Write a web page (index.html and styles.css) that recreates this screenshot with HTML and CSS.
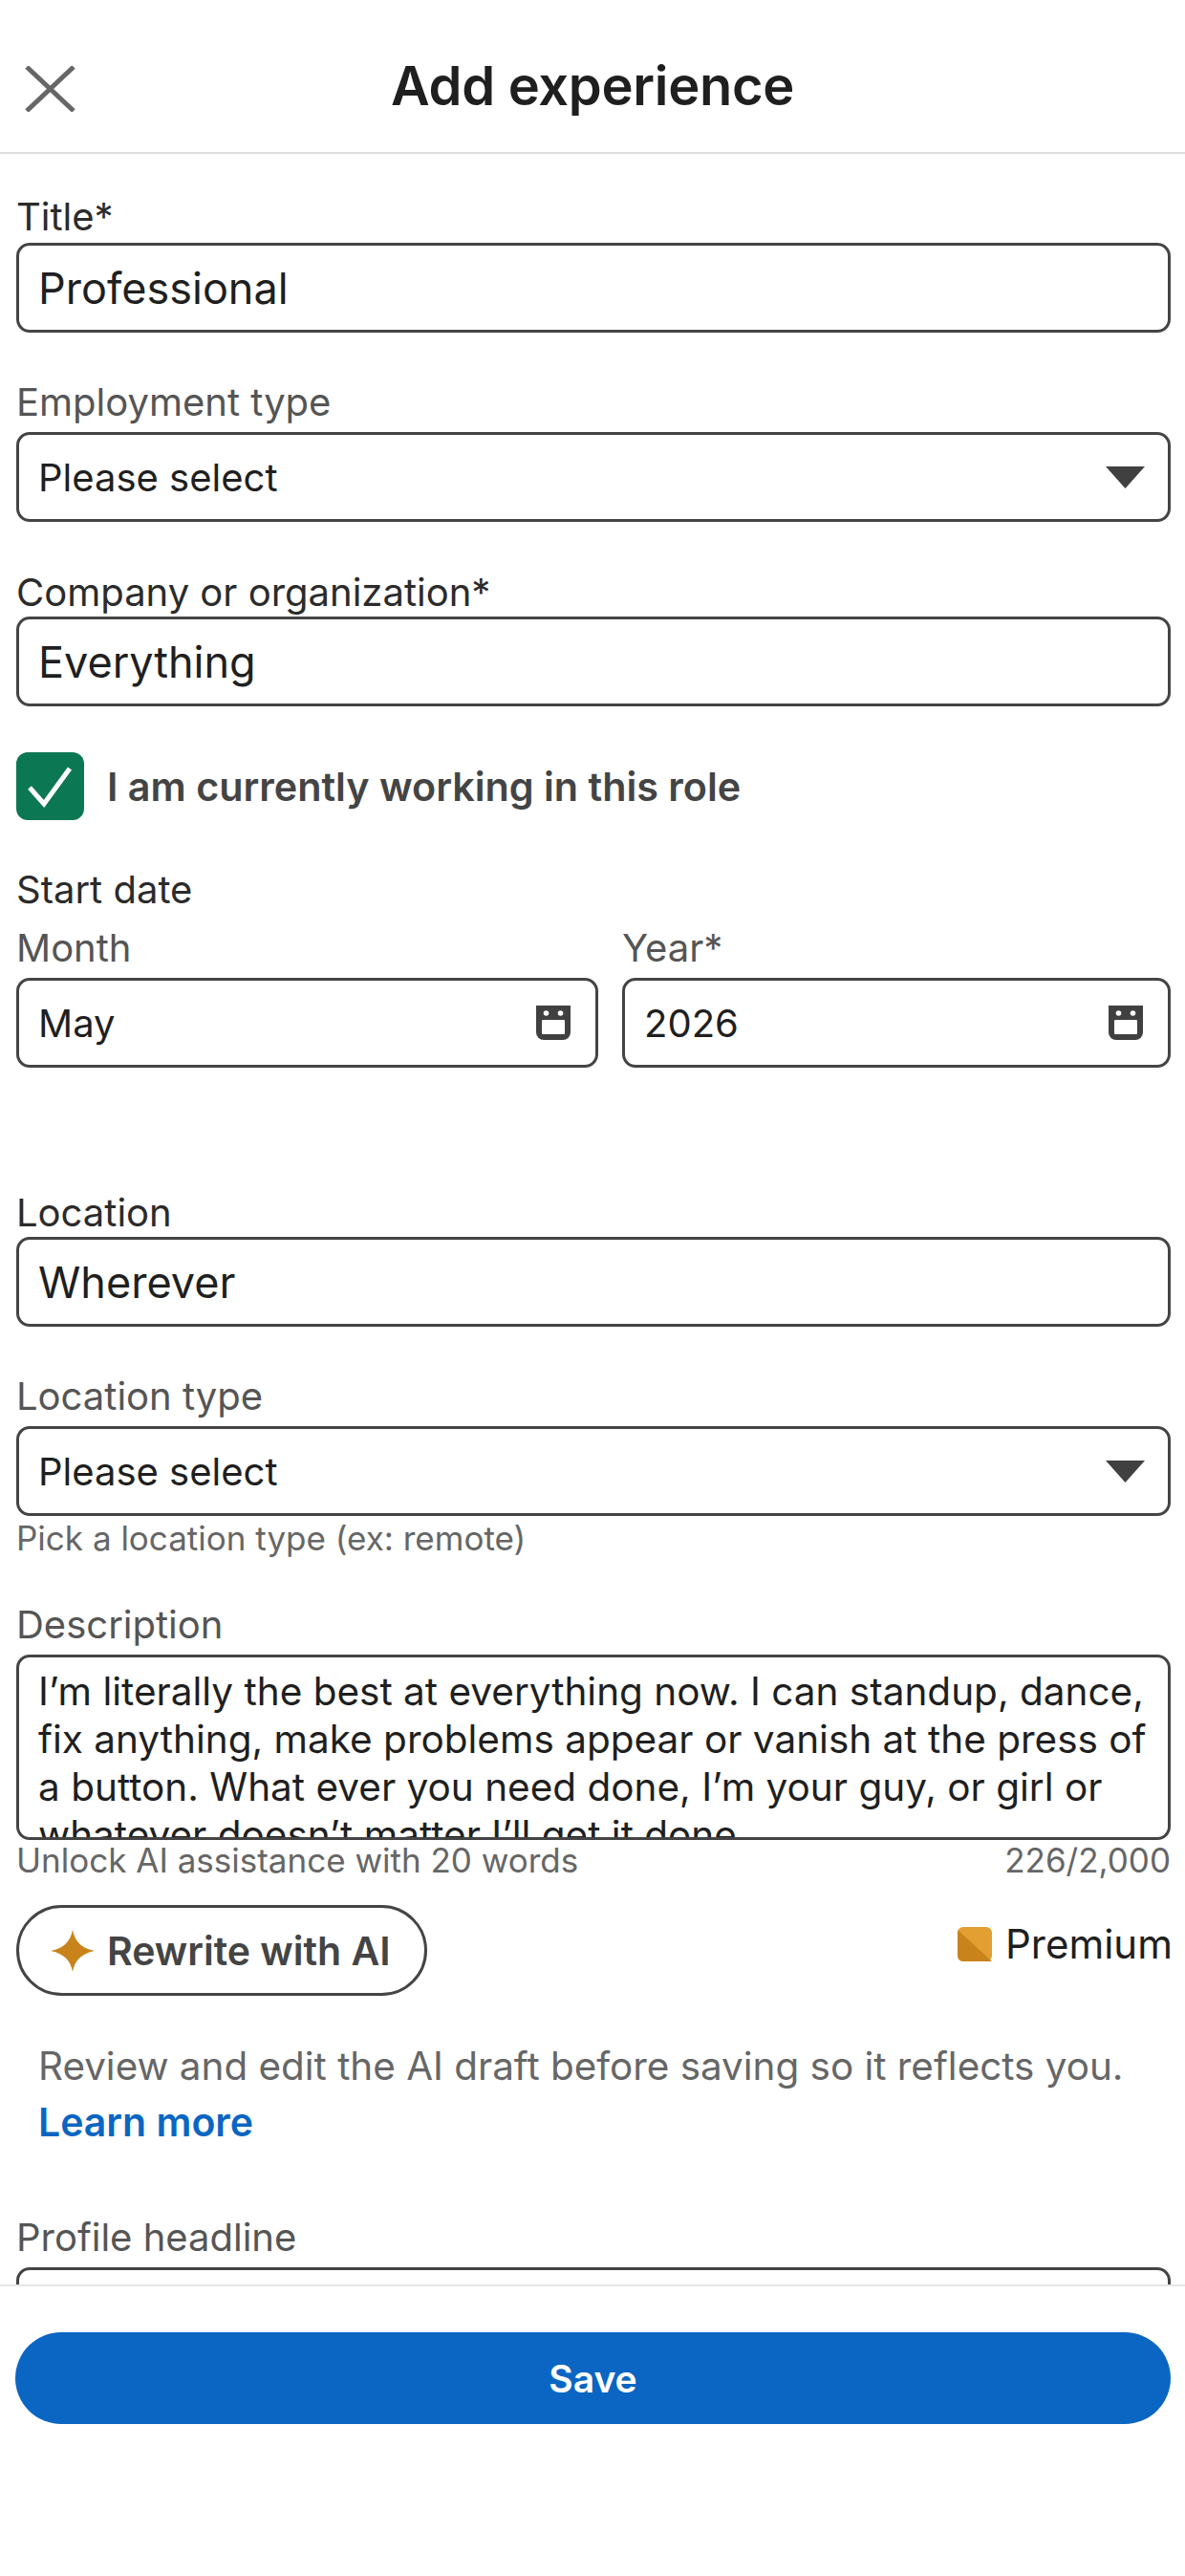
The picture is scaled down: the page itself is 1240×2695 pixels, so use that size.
FILE: index.html
```html
<!DOCTYPE html>
<html lang="en">
<head>
    <meta charset="UTF-8">
    <meta name="viewport" content="width=device-width, initial-scale=1.0">
    <title>Add experience</title>
    <link rel="stylesheet" href="styles.css">
</head>
<body>

    <header class="top-bar">
        <svg class="close-icon" viewBox="0 0 53 48" aria-hidden="true">
            <path d="M2 1 L51 47 M51 1 L2 47"/>
        </svg>
        <h1>Add experience</h1>
    </header>

    <main class="form">
        <div class="field field-title">
            <div class="label label-dark">Title*</div>
            <div class="box box-large">Professional</div>
        </div>

        <div class="field field-employment">
            <div class="label">Employment type</div>
            <div class="box">
                <span>Please select</span>
                <svg class="caret" viewBox="0 0 41 23" aria-hidden="true"><path d="M0 0 H41 L20.5 23 Z"/></svg>
            </div>
        </div>

        <div class="field field-company">
            <div class="label label-dark">Company or organization*</div>
            <div class="box box-large">Everything</div>
        </div>

        <div class="check-row">
            <div class="checkbox">
                <svg viewBox="0 0 71 71" aria-hidden="true"><path d="M14 37 L29 54 L56 17"/></svg>
            </div>
            <span>I am currently working in this role</span>
        </div>

        <div class="label label-dark start-date">Start date</div>
        <div class="date-row">
            <div class="date-col">
                <div class="label">Month</div>
                <div class="box">
                    <span>May</span>
                    <svg class="calendar" viewBox="0 0 36 36" aria-hidden="true">
                        <path d="M0 0 H36 V28 A8 8 0 0 1 28 36 H8 A8 8 0 0 1 0 28 Z"/>
                        <rect class="cut" x="6" y="15" width="24" height="15" rx="1"/>
                        <circle class="cut" cx="10.5" cy="8" r="2.8"/>
                        <circle class="cut" cx="25.5" cy="8" r="2.8"/>
                    </svg>
                </div>
            </div>
            <div class="date-col">
                <div class="label">Year*</div>
                <div class="box">
                    <span>2026</span>
                    <svg class="calendar" viewBox="0 0 36 36" aria-hidden="true">
                        <path d="M0 0 H36 V28 A8 8 0 0 1 28 36 H8 A8 8 0 0 1 0 28 Z"/>
                        <rect class="cut" x="6" y="15" width="24" height="15" rx="1"/>
                        <circle class="cut" cx="10.5" cy="8" r="2.8"/>
                        <circle class="cut" cx="25.5" cy="8" r="2.8"/>
                    </svg>
                </div>
            </div>
        </div>

        <div class="field field-location">
            <div class="label label-dark">Location</div>
            <div class="box box-large">Wherever</div>
        </div>

        <div class="field field-location-type">
            <div class="label">Location type</div>
            <div class="box">
                <span>Please select</span>
                <svg class="caret" viewBox="0 0 41 23" aria-hidden="true"><path d="M0 0 H41 L20.5 23 Z"/></svg>
            </div>
            <div class="hint">Pick a location type (ex: remote)</div>
        </div>

        <div class="field field-description">
            <div class="label">Description</div>
            <div class="textarea">I’m literally the best at everything now. I can standup, dance, fix anything, make problems appear or vanish at the press of a button. What ever you need done, I’m your guy, or girl or whatever doesn’t matter I’ll get it done.</div>
            <div class="hint hint-row">
                <span>Unlock AI assistance with 20 words</span>
                <span>226/2,000</span>
            </div>
        </div>

        <div class="ai-row">
            <div class="ai-button">
                <svg class="star" viewBox="0 0 46 44" aria-hidden="true"><path d="M23 0 C25 11 31 19 46 22 C31 25 25 33 23 44 C21 33 15 25 0 22 C15 19 21 11 23 0 Z"/></svg>
                <span>Rewrite with AI</span>
            </div>
            <div class="premium">
                <svg class="premium-icon" viewBox="0 0 36 36" aria-hidden="true">
                    <rect width="36" height="36" rx="6" fill="#e39f31"/>
                    <path d="M0 3 L36 36 H6 A6 6 0 0 1 0 30 Z" fill="#c8831a"/>
                </svg>
                <span>Premium</span>
            </div>
        </div>

        <p class="ai-note">Review and edit the AI draft before saving so it reflects you. <a href="#">Learn more</a></p>

        <div class="field field-headline">
            <div class="label">Profile headline</div>
            <div class="box"></div>
        </div>
    </main>

    <footer class="bottom-bar">
        <button>Save</button>
    </footer>

</body>
</html>
```

FILE: styles.css
```css
/* Global Styles */
* {
    box-sizing: border-box;
}

body {
    font-family: Inter, "Liberation Sans", sans-serif;
    display: flex;
    flex-direction: column;
    height: 100vh;
    margin: 0;
    background-color: #fff;
    color: #1f1f1f;
    overflow: hidden;
}

/* Top Bar */
.top-bar {
    position: relative;
    flex: none;
    height: 161px;
    display: flex;
    justify-content: center;
    align-items: center;
    padding-top: 20px;
    border-bottom: 2px solid #dedede;
}

.top-bar h1 {
    margin: 0;
    font-size: 56px;
    font-weight: 600;
    letter-spacing: -0.3px;
}

.close-icon {
    position: absolute;
    left: 26px;
    top: 69px;
    width: 53px;
    height: 48px;
    fill: none;
    stroke: #666;
    stroke-width: 5;
}

/* Form */
.form {
    flex: 1;
    min-height: 0;
    overflow: hidden;
    padding: 44px 15px 0 17px;
}

.label {
    height: 44px;
    line-height: 44px;
    font-size: 40px;
    color: #555;
    margin-bottom: 9px;
}

.label-dark {
    color: #2b2b2b;
    margin-bottom: 5px;
}

.box {
    height: 94px;
    display: flex;
    justify-content: space-between;
    align-items: center;
    padding: 0 24px 0 20px;
    border: 3px solid #444;
    border-radius: 14px;
    font-size: 40px;
}

.box-large {
    font-size: 45px;
}

.caret {
    width: 41px;
    height: 23px;
    fill: #404040;
}

.calendar {
    width: 36px;
    height: 36px;
    margin-right: 2px;
    fill: #404040;
}

.calendar .cut {
    fill: #fff;
}

.field-employment {
    margin-top: 51px;
}

.field-company {
    margin-top: 52px;
}

.field-company .label {
    margin-bottom: 3px;
}

/* Checkbox */
.check-row {
    display: flex;
    align-items: center;
    gap: 24px;
    margin-top: 48px;
    font-size: 41.3px;
    font-weight: 600;
    color: #444;
}

.checkbox {
    width: 71px;
    height: 71px;
    border-radius: 12px;
    background-color: #0c7853;
}

.checkbox svg {
    display: block;
    width: 100%;
    height: 100%;
    fill: none;
    stroke: #fff;
    stroke-width: 5;
}

/* Dates */
.start-date {
    margin-top: 51px;
    margin-bottom: 17px;
}

.date-row {
    display: grid;
    grid-template-columns: 609px 1fr;
    gap: 25px;
}

.field-location {
    margin-top: 130px;
}

.field-location .label {
    margin-bottom: 3px;
}

.field-location-type {
    margin-top: 51px;
}

.hint {
    height: 40px;
    line-height: 40px;
    margin-top: 3px;
    font-size: 35px;
    color: #666;
}

.hint-row {
    display: flex;
    justify-content: space-between;
    margin-top: 1px;
}

.field-description {
    margin-top: 49px;
}

.textarea {
    height: 194px;
    overflow: hidden;
    padding: 11px 17px 0 20px;
    border: 3px solid #444;
    border-radius: 14px;
    font-size: 40.5px;
    line-height: 50px;
    color: #1f1f1f;
}

/* AI Row */
.ai-row {
    display: flex;
    justify-content: space-between;
    align-items: flex-start;
    margin-top: 27px;
}

.ai-button {
    width: 430px;
    height: 95px;
    display: flex;
    align-items: center;
    gap: 13px;
    padding-left: 33px;
    border: 3px solid #444;
    border-radius: 48px;
    font-size: 41px;
    font-weight: 600;
    color: #444;
}

.star {
    width: 46px;
    height: 44px;
    fill: #c8831a;
}

.premium {
    display: flex;
    align-items: center;
    gap: 14px;
    margin-top: 15px;
    margin-right: -2px;
    font-size: 42px;
    color: #1f1f1f;
}

.premium-icon {
    width: 36px;
    height: 36px;
}

.ai-note {
    margin: 45px 0 0;
    padding-left: 23px;
    font-size: 40.4px;
    line-height: 58px;
    color: #666;
}

.ai-note a {
    display: block;
    font-size: 41px;
    font-weight: 600;
    color: #0a66c2;
    text-decoration: none;
}

.field-headline {
    margin-top: 70px;
}

/* Bottom Bar */
.bottom-bar {
    flex: none;
    height: 305px;
    padding: 48px 15px 0 16px;
    border-top: 2px solid #e6e6e6;
    background-color: #fff;
}

.bottom-bar button {
    display: block;
    width: 100%;
    height: 96px;
    border: none;
    border-radius: 48px;
    background-color: #0a66c2;
    color: #fff;
    font-family: inherit;
    font-size: 39px;
    font-weight: 600;
}
```
